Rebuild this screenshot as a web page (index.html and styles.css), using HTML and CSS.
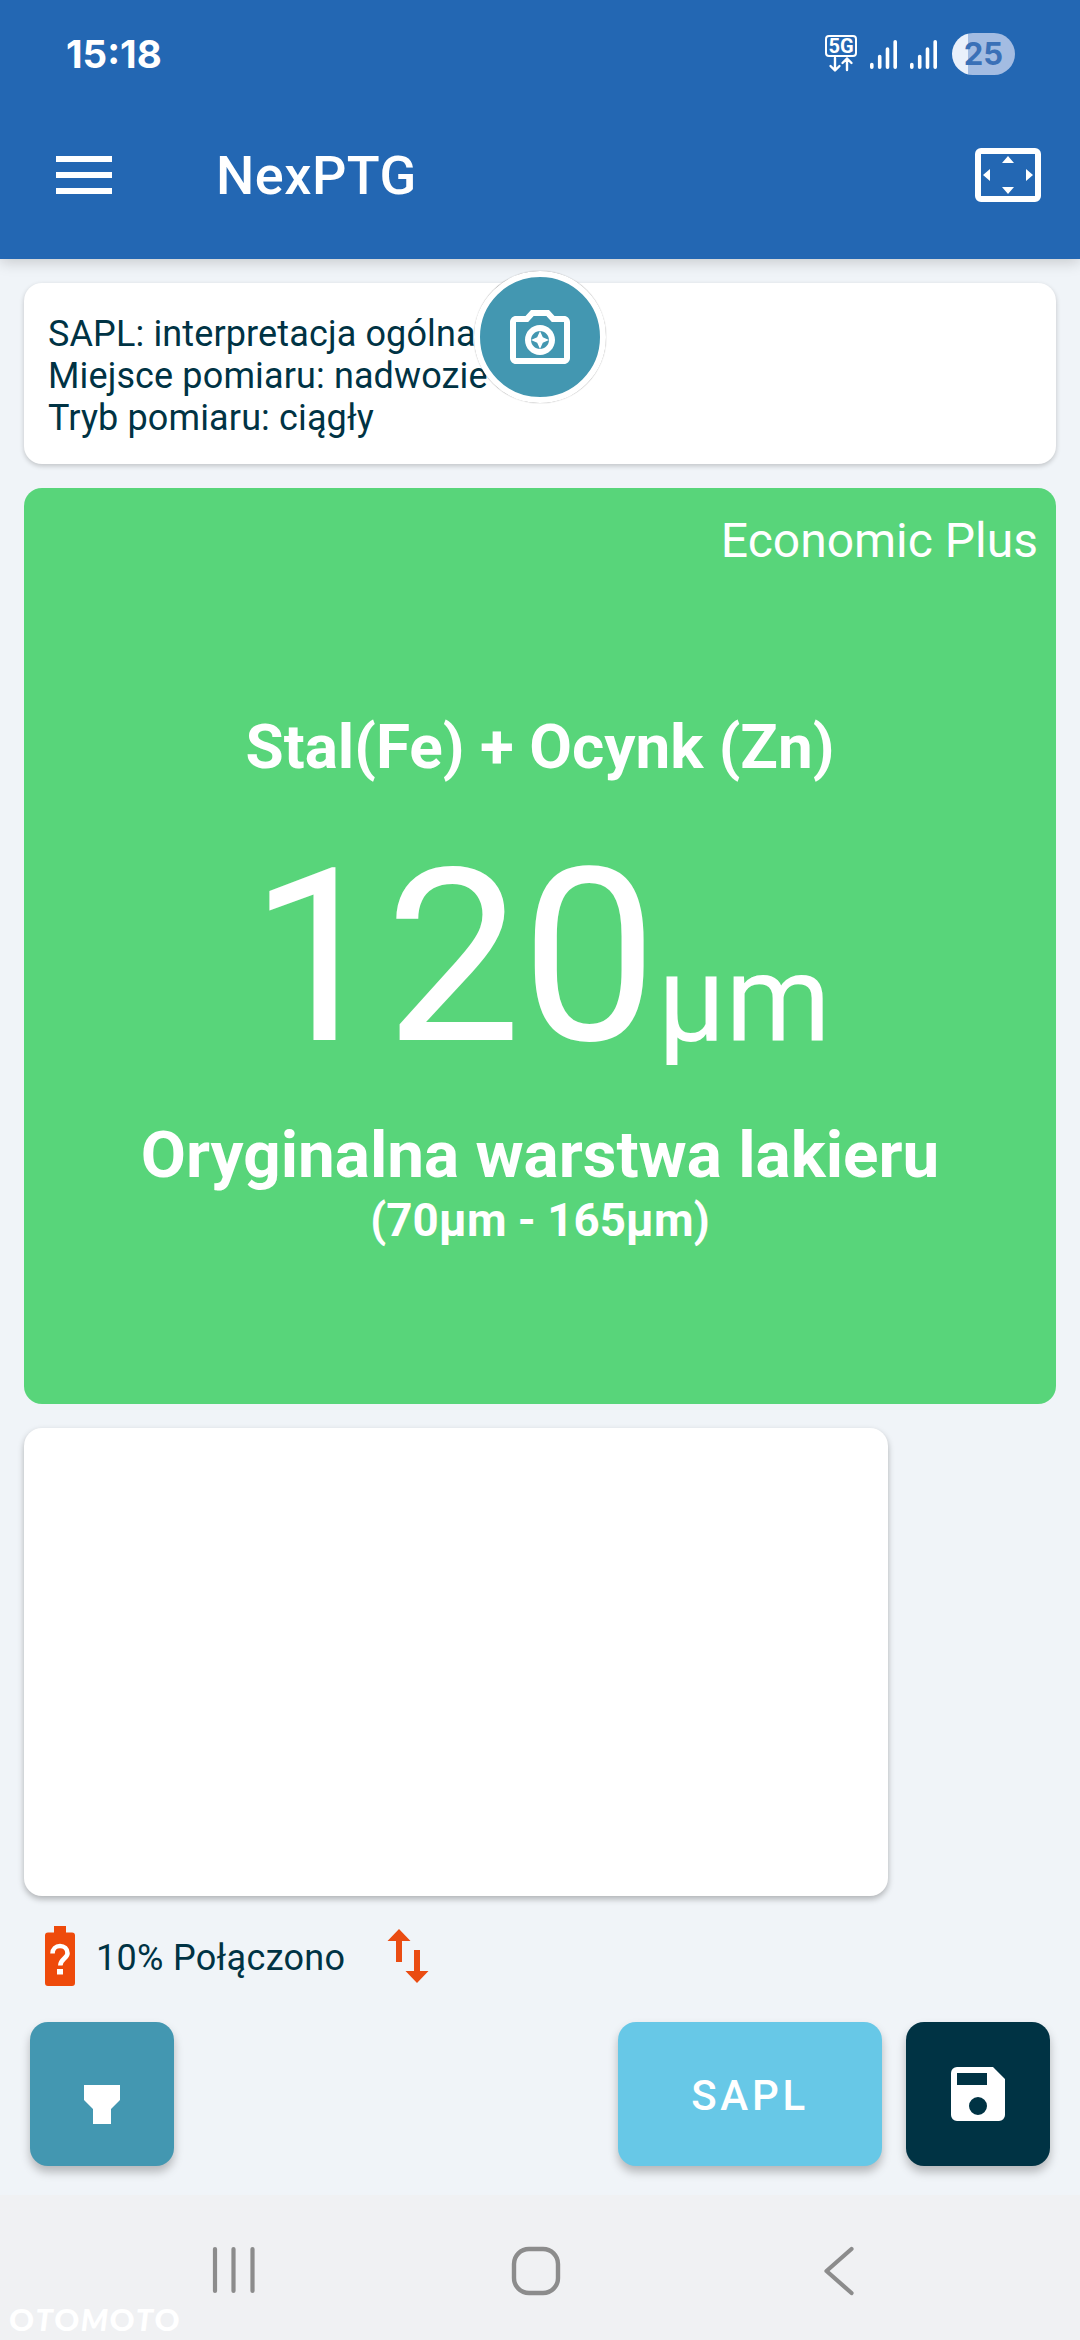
FILE: index.html
```html
<!DOCTYPE html>
<html lang="pl">
<head>
<meta charset="utf-8">
<title>NexPTG</title>
<link rel="stylesheet" href="styles.css">
</head>
<body>
<div class="screen">
  <header class="header">
    <div class="statusbar">
      <span class="clock">15:18</span>
      <div class="indicators">
        <svg class="network" width="32" height="38" viewBox="0 0 32 38">
          <rect x="1" y="1" width="30" height="20" rx="3" fill="none" stroke="#fff" stroke-width="2"/>
          <text x="16" y="18" text-anchor="middle" class="network-label">5G</text>
          <path d="M10 23v12M5.500 31l4.500 4.500 4.500-4.500M22 35V23.500M17.500 28l4.500-4.500 4.500 4.500" fill="none" stroke="#fff" stroke-width="2.400" stroke-linecap="round" stroke-linejoin="round"/>
        </svg>
        <svg class="signal" width="27" height="29" viewBox="0 0 27 29"><path d="M1.800 24.500v2.700M9.700 16.500v10.700M17.500 9v18.200M25.200 1.800v25.400" stroke="#fff" stroke-width="3.600" stroke-linecap="round"/></svg>
        <svg class="signal" width="27" height="29" viewBox="0 0 27 29"><path d="M1.800 24.500v2.700M9.700 16.500v10.700M17.500 9v18.200M25.200 1.800v25.400" stroke="#fff" stroke-width="3.600" stroke-linecap="round"/></svg>
        <span class="charge">25</span>
      </div>
    </div>
    <div class="appbar">
      <svg class="menu" width="56" height="38" viewBox="0 0 56 38"><path d="M0 0h56v6H0zM0 16h56v6H0zM0 32h56v6H0z" fill="#fff"/></svg>
      <h1 class="title">NexPTG</h1>
      <svg class="expand" width="66" height="54" viewBox="0 0 66 54"><rect x="3" y="3" width="60" height="48" rx="3" fill="none" stroke="#fff" stroke-width="6"/><path d="M33 8l6 7H27zM33 46l6-7H27zM8 27l7-6v12zM58 27l-7-6v12z" fill="#fff"/></svg>
    </div>
  </header>

  <main class="content">
    <section class="card info">
      <p>SAPL: interpretacja ogólna</p>
      <p>Miejsce pomiaru: nadwozie</p>
      <p>Tryb pomiaru: ciągły</p>
      <button class="camera">
        <svg width="72" height="72" viewBox="0 0 24 24" fill="#fff"><path d="M20 5h-3.170L15 3H9L7.170 5H4c-1.100 0-2 .9-2 2v12c0 1.100.9 2 2 2h16c1.100 0 2-.9 2-2V7c0-1.100-.9-2-2-2zm0 14H4V7h4.050l1.830-2h4.240l1.830 2H20v12zM12 8c-2.760 0-5 2.240-5 5s2.240 5 5 5 5-2.240 5-5-2.240-5-5-5zm0 8c-1.650 0-3-1.350-3-3s1.350-3 3-3 3 1.350 3 3-1.350 3-3 3z"/><path d="M12 16l.94-2.060L15 13l-2.060-.94L12 10l-.94 2.060L9 13l2.060.94z"/></svg>
      </button>
    </section>

    <section class="reading">
      <p class="device">Economic Plus</p>
      <p class="material">Stal(Fe) + Ocynk (Zn)</p>
      <p class="value">120<span class="unit">µm</span></p>
      <p class="verdict">Oryginalna warstwa lakieru</p>
      <p class="range">(70µm - 165µm)</p>
    </section>

    <section class="card history"></section>

    <div class="connection">
      <svg width="72" height="72" viewBox="0 0 72 72"><path d="M48 6.500h-6V0H30v6.500h-6a3 3 0 0 0-3 3V57a3 3 0 0 0 3 3h24a3 3 0 0 0 3-3V9.500a3 3 0 0 0-3-3z" transform="translate(0 6)" fill="#ee4a0b"/><path d="M28.500 33.500c0-4.500 3.300-7.500 7.500-7.500s7.500 3 7.500 7.200c0 5-7.200 5.800-7.200 12.300" fill="none" stroke="#fff" stroke-width="4.600"/><path d="M33 49h6v5.500h-6z" fill="#fff"/></svg>
      <span class="state">10% Połączono</span>
      <svg class="transfer" width="42" height="54" viewBox="0 0 42 54" fill="#ea4c12"><path d="M12 0l11.500 12H15v21H9V12H.5zM27 21h6v21h8.500L30 54 18.500 42H27z"/></svg>
    </div>

    <div class="actions">
      <button class="button light"><svg width="36" height="39" viewBox="0 0 36 39"><path d="M0 0h36v15l-9 9v15H9V24l-9-9z" fill="#fff"/></svg></button>
      <button class="button sapl">SAPL</button>
      <button class="button save"><svg width="54" height="54" viewBox="0 0 54 54"><path fill-rule="evenodd" d="M6 0h36l12 12v36a6 6 0 0 1-6 6H6a6 6 0 0 1-6-6V6a6 6 0 0 1 6-6zM6 6v12h30V6zM27 30a9 9 0 1 0 0 18 9 9 0 0 0 0-18z" fill="#fff"/></svg></button>
    </div>
  </main>

  <nav class="navbar">
    <svg class="recents" width="44" height="48" viewBox="0 0 44 48"><path d="M3 3v42M21.500 3v42M40.500 3v42" stroke="#8c8c8c" stroke-width="4.200" stroke-linecap="round"/></svg>
    <svg class="home" width="50" height="50" viewBox="0 0 50 50"><rect x="3" y="3" width="44" height="44" rx="15" fill="none" stroke="#8c8c8c" stroke-width="4.400"/></svg>
    <svg class="back" width="32" height="50" viewBox="0 0 32 50"><path d="M28.500 3L3.500 25l25 22" fill="none" stroke="#8c8c8c" stroke-width="4.200" stroke-linecap="round" stroke-linejoin="round"/></svg>
    <span class="watermark">O<i>T</i>O<i>M</i>O<i>T</i>O</span>
  </nav>
</div>
</body>
</html>
```
FILE: styles.css
```css
* { box-sizing: border-box; }

body {
  margin: 0;
  font-family: Roboto, "Noto Sans", sans-serif;
  color: #003344;
}

p, h1 { margin: 0; }

button {
  border: 0;
  padding: 0;
  font: inherit;
  color: #fff;
}

svg { display: block; flex: none; }

.screen {
  width: 1080px;
  height: 2340px;
  display: flex;
  flex-direction: column;
  background: #f0f4f8;
  overflow: hidden;
}

.header {
  height: 259px;
  flex: none;
  background: #2367b3;
  color: #fff;
  box-shadow: 0 3px 14px rgba(0, 0, 0, .18);
}

.statusbar {
  height: 108px;
  padding: 0 65px 0 66px;
  display: flex;
  align-items: center;
  justify-content: space-between;
}

.clock {
  font: 700 38.500px/46px Inter, sans-serif;
}

.indicators {
  display: flex;
  align-items: center;
}

.network-label {
  font: 700 20px Roboto, sans-serif;
  fill: #fff;
}

.signal { margin-left: 13px; }

.charge {
  width: 63px;
  height: 42px;
  margin-left: 15px;
  border-radius: 21px;
  background: linear-gradient(90deg, #e9f0fb 16px, #a3bce2 16px);
  color: #3a70b7;
  font: 700 31px/42px Inter, sans-serif;
  text-align: center;
}

.appbar {
  height: 133px;
  padding: 0 39px 0 56px;
  display: flex;
  align-items: center;
}

.title {
  margin-left: 104px;
  padding-top: 3px;
  font-size: 54px;
  line-height: 64px;
  font-weight: 500;
  letter-spacing: .5px;
}

.expand { margin-left: auto; }

.content {
  height: 1936px;
  flex: none;
  padding: 24px 24px 0;
}

.card {
  background: #fff;
  border-radius: 18px;
  box-shadow: 0 2px 5px rgba(0, 0, 0, .2);
}

.info {
  position: relative;
  height: 181px;
  padding: 30px 24px;
  font-size: 36px;
  line-height: 42px;
  letter-spacing: .13px;
}

.camera {
  position: absolute;
  left: 450px;
  top: -12px;
  width: 132px;
  height: 132px;
  border: 6px solid #fff;
  border-radius: 50%;
  background: #4397b1;
  box-shadow: 0 0 1px rgba(0, 0, 0, .5);
  display: flex;
  align-items: center;
  justify-content: center;
}

.reading {
  height: 916px;
  margin-top: 24px;
  padding: 25px 18px 0;
  border-radius: 18px;
  background: #58d57a;
  color: #fff;
  text-align: center;
}

.device {
  font-size: 48px;
  line-height: 56px;
  text-align: right;
}

.material {
  margin-top: 142px;
  font-size: 62px;
  line-height: 72px;
  font-weight: 700;
}

.value {
  margin-top: 32px;
  font-size: 242px;
  line-height: 284px;
  height: 284px;
}

.unit {
  font-size: 120px;
  line-height: 1;
}

.verdict {
  margin-top: 17px;
  font-size: 65.600px;
  line-height: 78px;
  font-weight: 700;
}

.range {
  font-size: 45.700px;
  line-height: 54px;
  font-weight: 700;
}

.history {
  width: 864px;
  height: 468px;
  margin-top: 24px;
  box-shadow: 0 3px 6px rgba(0, 0, 0, .28);
}

.connection {
  height: 126px;
  padding-bottom: 6px;
  display: flex;
  align-items: center;
}

.state {
  padding-top: 3px;
  font-size: 36px;
  line-height: 42px;
  letter-spacing: .3px;
}

.transfer { margin-left: 42px; }

.actions {
  display: flex;
  gap: 24px;
  padding: 0 6px;
}

.button {
  width: 144px;
  height: 144px;
  border-radius: 18px;
  box-shadow: 0 6px 10px rgba(0, 0, 0, .25);
  display: flex;
  align-items: center;
  justify-content: center;
}

.light {
  margin-right: auto;
  padding-top: 21px;
  background: #4397b1;
}

.sapl {
  width: 264px;
  padding-top: 2px;
  background: #67c8e7;
  font-size: 42px;
  font-weight: 500;
  letter-spacing: 3.700px;
}

.save { background: #003344; }

.navbar {
  position: relative;
  height: 145px;
  flex: none;
  padding: 51px 225px 0 212px;
  background: #f0f1f3;
  display: flex;
  justify-content: space-between;
  align-items: flex-start;
}

.home { margin-right: 7px; }

.watermark {
  position: absolute;
  left: 9px;
  bottom: 3px;
  font: 900 31px/36px Lato, sans-serif;
  letter-spacing: 1.300px;
  color: #fff;
}
```
